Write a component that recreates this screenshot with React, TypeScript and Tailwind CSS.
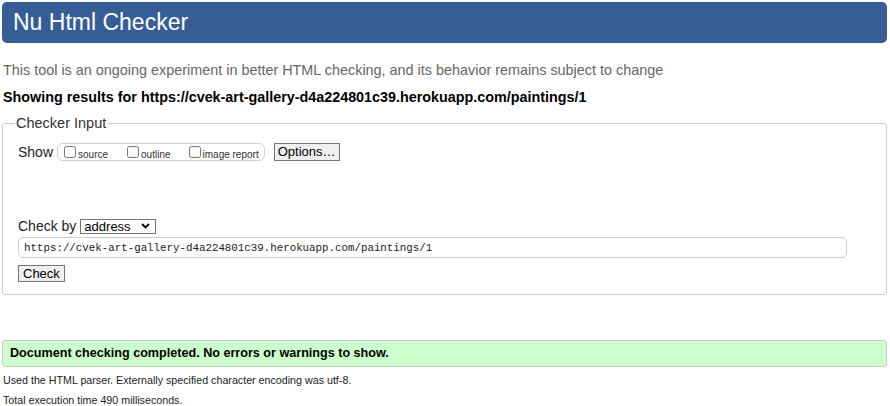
export default function App() {
  const url = 'https://cvek-art-gallery-d4a224801c39.herokuapp.com/paintings/1';

  return (
    <div className="min-h-screen bg-white pt-[2px] pl-[2px] pr-[3px] font-['Liberation_Sans',Arial,sans-serif] text-black">
      {/* Title bar */}
      <h1 className="h-[41px] rounded-[5px] bg-[#365d95] pl-[11px] text-[23px] leading-[41px] text-white">
        Nu Html Checker
      </h1>

      <p className="mt-[18px] pl-[1px] text-[14.4px] leading-[18px] text-[#666]">
        This tool is an ongoing experiment in better HTML checking, and its behavior remains subject to change
      </p>
      <p className="mt-[9px] pl-[1px] text-[14.35px] font-bold leading-[18px]">
        Showing results for {url}
      </p>

      {/* Checker input */}
      <fieldset className="mt-[9px] rounded-[3px] border border-[#ccc] px-[15px] pb-[12px] pt-[12px]">
        <legend className="ml-[-3px] px-[1px] text-[14.5px] leading-[16px] text-[#333]">Checker Input</legend>

        <div className="flex items-center">
          <span className="text-[14px] leading-[18px] text-[#222]">Show</span>
          <div className="ml-[4px] flex h-[18px] items-center rounded-[6px] border border-[#ccc] pl-[6px] pr-[5px] text-[10px] text-[#333]">
            <label className="flex items-center">
              <input type="checkbox" className="m-0 h-[12px] w-[12px]" />
              <span className="ml-[2px] mt-[4px]">source</span>
            </label>
            <label className="ml-[19px] flex items-center">
              <input type="checkbox" className="m-0 h-[12px] w-[12px]" />
              <span className="ml-[2px] mt-[4px]">outline</span>
            </label>
            <label className="ml-[18px] flex items-center">
              <input type="checkbox" className="m-0 h-[12px] w-[12px]" />
              <span className="ml-[2px] mt-[4px]">image report</span>
            </label>
          </div>
          <button className="ml-[9px] h-[18px] w-[66px] border border-[#767676] bg-[#efefef] text-center text-[13px] leading-[16px] text-black">
            Options…
          </button>
        </div>

        <div className="mt-[56px] flex items-center">
          <span className="text-[14px] leading-[18px] text-[#222]">Check by</span>
          <div className="ml-[4px] flex h-[15px] w-[76px] items-center justify-between border border-[#767676] pl-[3px] pr-[5px] text-[13px] leading-[13px]">
            <span>address</span>
            <svg width="9" height="6" viewBox="0 0 9 6" fill="none">
              <path d="M1 1l3.5 3.5L8 1" stroke="#000" strokeWidth="1.8" />
            </svg>
          </div>
        </div>

        <input
          readOnly
          value={url}
          className="mt-[2px] block h-[21px] w-[829px] rounded-[5px] border border-[#ccc] px-[5px] font-['Liberation_Mono','Courier_New',monospace] text-[10.8px] text-[#222] outline-none"
        />

        <button className="mt-[7px] block h-[17px] border border-[#767676] bg-[#efefef] px-[4px] text-[13px] leading-[15px] text-black">
          Check
        </button>
      </fieldset>

      {/* Result */}
      <div className="mt-[45px] h-[27px] rounded-[3px] border border-[#ccc] bg-[#ccffcc] pl-[7px] text-[12.6px] font-bold leading-[25px]">
        Document checking completed. No errors or warnings to show.
      </div>

      <p className="mt-[6px] pl-[1px] text-[10.7px] leading-[14px] text-[#222]">
        Used the HTML parser. Externally specified character encoding was utf-8.
      </p>
      <p className="mt-[6px] pl-[1px] text-[10.7px] leading-[14px] text-[#222]">
        Total execution time 490 milliseconds.
      </p>
    </div>
  );
}
